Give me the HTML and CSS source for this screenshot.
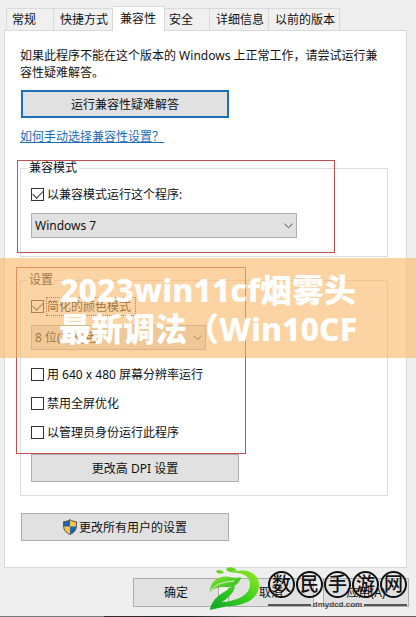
FILE: index.html
```html
<!DOCTYPE html>
<html lang="zh-CN">

<head>
    <meta charset="utf-8">
    <title>兼容性</title>
    <link rel="stylesheet" href="styles.css">
</head>

<body>
    <div class="dialog">
        <nav class="tabs">
            <button type="button" class="tab tab-first">常规</button>
            <button type="button" class="tab">快捷方式</button>
            <button type="button" class="tab active">兼容性</button>
            <button type="button" class="tab tab-short">安全</button>
            <button type="button" class="tab">详细信息</button>
            <button type="button" class="tab tab-last">以前的版本</button>
        </nav>

        <form class="panel">
            <p>如果此程序不能在这个版本的 Windows 上正常工作，请尝试运行兼容性疑难解答。</p>
            <button type="button" class="btn wide default">运行兼容性疑难解答</button>
            <a class="help" href="#">如何手动选择兼容性设置？</a>

            <fieldset>
                <legend>兼容模式</legend>
                <label class="check"><input type="checkbox" checked><span>以兼容模式运行这个程序:</span></label>
                <div class="combo">
                    <select aria-label="兼容模式">
                        <option>Windows 7</option>
                    </select>
                    <svg class="arrow" width="9" height="6" viewBox="0 0 9 6"><path d="M0.5 0.8L4.5 4.6L8.5 0.8"/></svg>
                </div>
                <div class="mark mark-mode"></div>
            </fieldset>

            <fieldset>
                <legend>设置</legend>
                <label class="check"><input type="checkbox" checked><span class="focused">简化的颜色模式</span></label>
                <div class="combo combo-small">
                    <select aria-label="颜色模式">
                        <option>8 位(256)色</option>
                    </select>
                    <svg class="arrow" width="9" height="6" viewBox="0 0 9 6"><path d="M0.5 0.8L4.5 4.6L8.5 0.8"/></svg>
                </div>
                <div class="options">
                    <label class="check"><input type="checkbox"><span>用 640 x 480 屏幕分辨率运行</span></label>
                    <label class="check"><input type="checkbox"><span>禁用全屏优化</span></label>
                    <label class="check"><input type="checkbox"><span>以管理员身份运行此程序</span></label>
                </div>
                <button type="button" class="btn wide">更改高 DPI 设置</button>
                <div class="mark mark-settings"></div>
            </fieldset>

            <button type="button" class="btn wide all-users">
                <svg width="14" height="16" viewBox="0 0 14 16">
                    <path fill="#f6c445" d="M7 0.5C9 2 11 2.6 13.5 2.6V7C13.5 11 11 14 7 15.5C3 14 0.5 11 0.5 7V2.6C3 2.6 5 2 7 0.5Z"/>
                    <path fill="#1f66b0" d="M7 0.5C5 2 3 2.6 0.5 2.6V7.5H7ZM7 7.5H13.5C13.3 11.2 11 14 7 15.5Z"/>
                    <path fill="none" stroke="#555" d="M7 0.7C9 2 11 2.6 13.4 2.6V7C13.4 11 11 14 7 15.4C3 14 0.6 11 0.6 7V2.6C3 2.6 5 2 7 0.7Z"/>
                </svg>更改所有用户的设置
            </button>
        </form>

        <div class="actions">
            <button type="button" class="btn">确定</button>
            <button type="button" class="btn">取消</button>
            <button type="button" class="btn">应用(A)</button>
        </div>
    </div>
    <div class="desktop"></div>

    <div class="banner">
        <span>2023win11cf烟雾头</span>
        <span>最新调法（Win10CF</span>
    </div>

    <div class="brand">
        <svg class="leaf" width="52" height="44" viewBox="0 0 52 44">
            <defs>
                <linearGradient id="green" x1="0" y1="1" x2="1" y2="0">
                    <stop offset="0" stop-color="#0fa32a"/>
                    <stop offset="0.5" stop-color="#35cf1c"/>
                    <stop offset="1" stop-color="#9be81c"/>
                </linearGradient>
                <linearGradient id="lime" x1="0" y1="0" x2="1" y2="1">
                    <stop offset="0" stop-color="#8be32a"/>
                    <stop offset="1" stop-color="#18b52b"/>
                </linearGradient>
            </defs>
            <path fill="url(#green)" d="M22 6C35 0 50 5 50 18C50 32 36 38 22 39C14 40 8 41 1 43C2 36 6 31 12 27C18 23 22 21 24 17C28 19 25 27 13 35C29 34 41 28 41 17C41 9 33 5 22 6Z"/>
            <path fill="url(#lime)" d="M1 25C1 14 10 8 21 10C25 11 29 11 32 10C31 16 26 20 19 20C12 20 5 20 1 25Z"/>
            <path fill="none" stroke="#dff7c8" stroke-width="1" d="M2 23C8 16 16 15 25 14"/>
            <path fill="#66d51f" d="M7 4C10 2 13 3 15 6C11 7 8 7 7 4ZM17 2C20-1 25 0 28 3C24 6 19 6 17 2Z"/>
        </svg>
        <div class="brand-text">
            <div class="circles"><b>数</b><b>民</b><b>手</b><b>游</b><b>网</b></div>
            <div class="site">dmydcd.com</div>
        </div>
    </div>
</body>

</html>
```

FILE: styles.css
```css
* {
    box-sizing: border-box;
}

body {
    position: relative;
    display: flex;
    flex-direction: column;
    min-height: 100vh;
    margin: 0;
    background-color: #efefef;
    color: #111;
    font-family: "Noto Sans", "Noto Sans CJK SC", sans-serif;
    font-size: 12px;
    line-height: 17px;
}

button,
select {
    font: inherit;
    color: inherit;
    border-radius: 0;
}

.dialog {
    flex: 1;
    padding: 6px 7px 0 4px;
}

/* tabs */
.tabs {
    display: flex;
    align-items: flex-end;
    padding-left: 2px;
}

.tab {
    height: 22px;
    padding: 0 4px 0 6px;
    border: 1px solid #d9d9d9;
    border-width: 1px 1px 0 0;
    background-color: #f0f0f0;
    text-align: left;
    white-space: nowrap;
}

.tab-first {
    width: 48px;
    padding-left: 5px;
    border-left-width: 1px;
}

.tab-short {
    width: 45px;
    padding-left: 4px;
}

.tab-last {
    width: 71px;
}

.tab.active {
    width: 52px;
    height: 25px;
    padding: 0 7px 2px;
    margin-bottom: -1px;
    background-color: #fff;
    position: relative;
}

.panel {
    margin-right: 2px;
    padding: 16px 18px 26px 15px;
    border: 1px solid #d9d9d9;
    background-color: #fff;
}

p {
    margin: 0 0 9px;
}

.btn {
    width: 86px;
    height: 29px;
    padding: 0;
    border: 1px solid #adadad;
    background-color: #e1e1e1;
}

.btn.wide {
    display: block;
    width: 208px;
    height: 28px;
}

.panel > .btn {
    margin-left: 1px;
}

.btn.default {
    border: 2px solid #1f70b3;
}

.help {
    display: block;
    margin: 10px 0 15px;
    color: #1a6cb5;
}

/* groups */
fieldset {
    position: relative;
    min-width: 0;
    margin: 0 0 15px;
    padding: 10px 10px 18px;
    border: 1px solid #dcdcdc;
}

fieldset + fieldset {
    margin-bottom: 17px;
    padding-bottom: 13px;
}

legend {
    padding: 0 2px;
    margin-left: -4px;
    line-height: 16px;
}

.check {
    display: flex;
    align-items: center;
    gap: 3px;
    height: 16px;
}

.check input {
    appearance: none;
    display: grid;
    place-items: center;
    width: 13px;
    height: 13px;
    margin: 0;
    border: 1px solid #333;
    background-color: #fff;
}

.check input:checked::before {
    content: "";
    width: 9px;
    height: 5px;
    margin-bottom: 3px;
    border: solid #333;
    border-width: 0 0 1px 1px;
    transform: rotate(-45deg);
}

.focused {
    outline: 1px dotted #333;
    padding-right: 4px;
}

.combo {
    position: relative;
    width: 266px;
    margin-top: 11px;
}

.combo-small {
    width: 175px;
}

.combo select {
    appearance: none;
    display: block;
    width: 100%;
    height: 25px;
    padding: 0 3px;
    border: 1px solid #adadad;
    background-color: #e1e1e1;
}

.arrow {
    position: absolute;
    right: 4px;
    top: 10px;
    fill: none;
    stroke: #444;
    pointer-events: none;
}

.options {
    display: flex;
    flex-direction: column;
    gap: 13px;
    margin: 16px 0 14px;
}

.mark {
    position: absolute;
    border: 1px solid #c0504d;
    pointer-events: none;
}

.mark-mode {
    left: -4px;
    top: -16px;
    width: 318px;
    height: 93px;
}

.mark-settings {
    left: -5px;
    top: -21px;
    width: 230px;
    height: 187px;
}

.btn.all-users {
    display: flex;
    align-items: center;
    justify-content: center;
    gap: 2px;
}

.actions {
    display: flex;
    justify-content: flex-end;
    gap: 9px;
    margin-top: 10px;
}

.desktop {
    height: 1px;
    background: linear-gradient(90deg, #777 25%, #3a2a2e 25%, #222 45%, #665c5c 60%);
}

/* title strip over the dialog */
.banner {
    position: absolute;
    top: 258px;
    left: 0;
    right: 0;
    height: 100px;
    padding-top: 12px;
    background-color: rgba(250, 182, 100, 0.6);
    color: #fff;
    font-size: 32px;
    font-weight: 800;
    line-height: 39px;
    text-align: center;
}

.banner span {
    display: block;
    white-space: nowrap;
}

/* site logo */
.brand {
    position: absolute;
    right: 9px;
    top: 567px;
    display: flex;
    gap: 7px;
}

.brand-text {
    padding-top: 4px;
}

.circles {
    display: flex;
    gap: 1px;
}

.circles b {
    width: 27px;
    height: 27px;
    border: 2px solid #111;
    border-radius: 50%;
    font-size: 19px;
    font-weight: 500;
    line-height: 22px;
    display: flex;
    justify-content: center;
}

.site {
    display: flex;
    align-items: center;
    gap: 2px;
    color: #444;
    font: bold 8px/14px "Liberation Sans", sans-serif;
}

.site::before,
.site::after {
    content: "";
    flex: 1;
    height: 2px;
    background-color: #555;
}
```
